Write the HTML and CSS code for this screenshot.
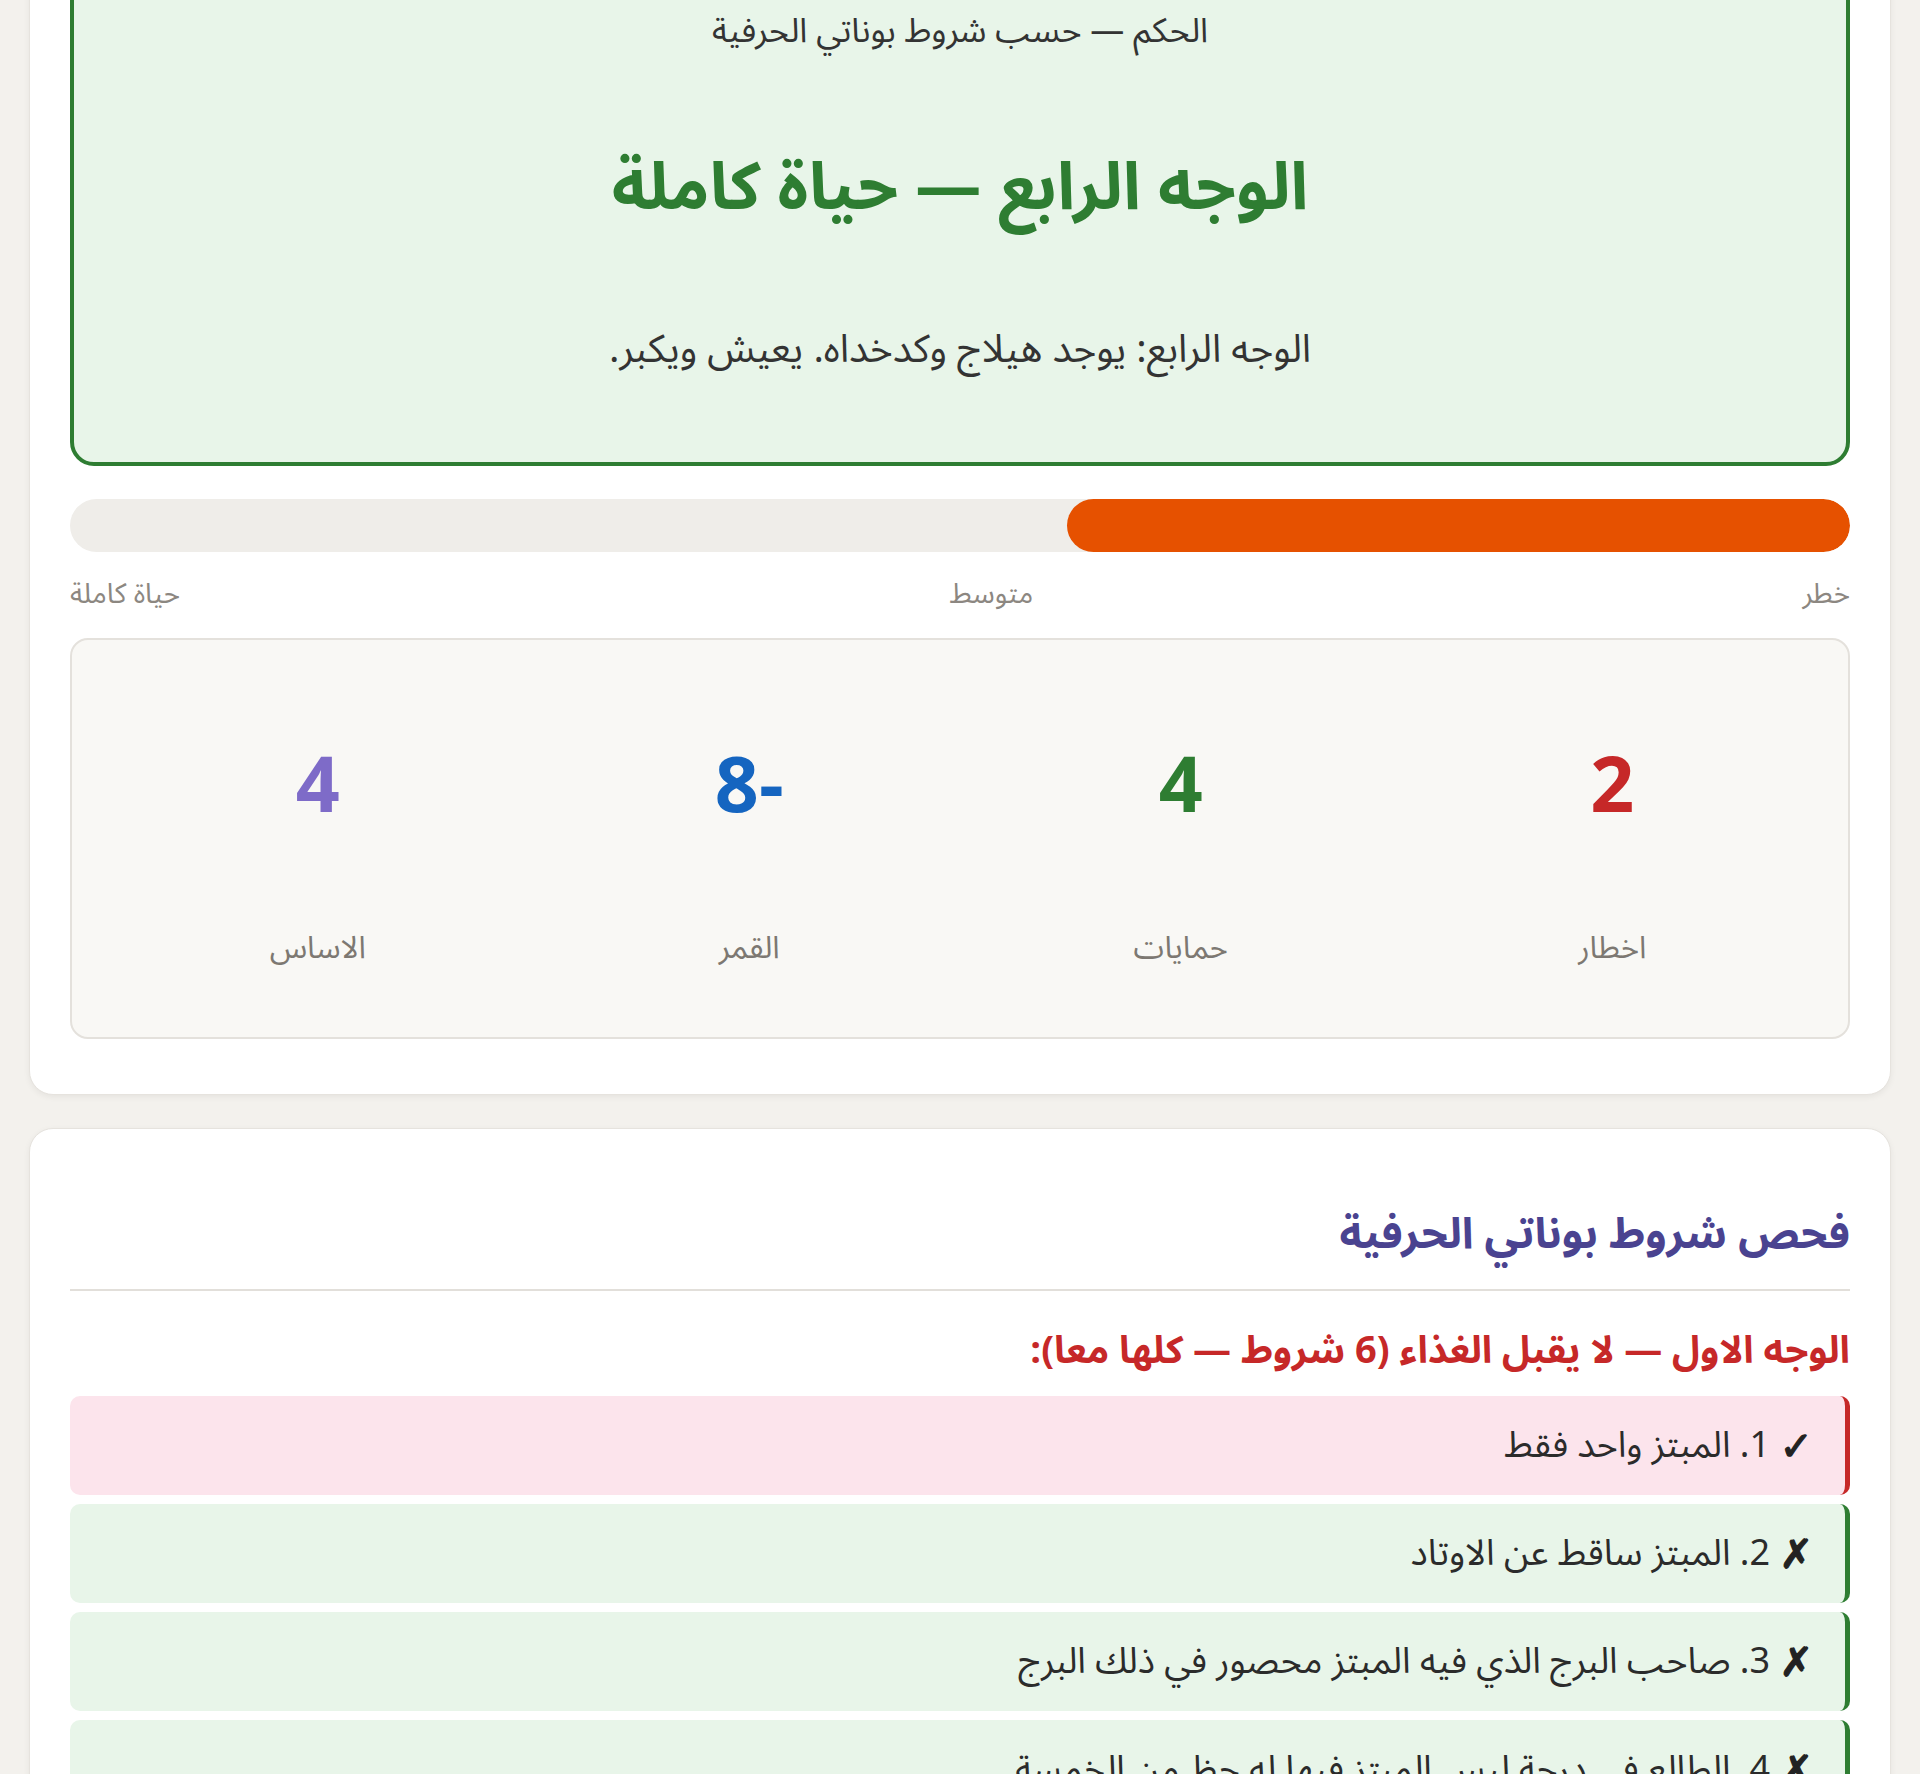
FILE: index.html
```html
<!DOCTYPE html>
<html lang="ar" dir="rtl">
<head>
<meta charset="utf-8">
<title>الحكم</title>
<link rel="stylesheet" href="styles.css">
</head>
<body>
<main class="page">
  <section class="card card-verdict">
    <div class="verdict">
      <div class="verdict-label">الحكم — حسب شروط بوناتي الحرفية</div>
      <h1 class="verdict-title">الوجه الرابع — حياة كاملة</h1>
      <p class="verdict-desc">الوجه الرابع: يوجد هيلاج وكدخداه. يعيش ويكبر.</p>
    </div>
    <div class="meter">
      <div class="meter-fill" style="width:44%"></div>
    </div>
    <div class="meter-labels">
      <span>خطر</span>
      <span>متوسط</span>
      <span>حياة كاملة</span>
    </div>
    <div class="stats">
      <div class="stat">
        <div class="stat-num num-red">2</div>
        <div class="stat-label">اخطار</div>
      </div>
      <div class="stat">
        <div class="stat-num num-green">4</div>
        <div class="stat-label">حمايات</div>
      </div>
      <div class="stat">
        <div class="stat-num num-blue">-8</div>
        <div class="stat-label">القمر</div>
      </div>
      <div class="stat">
        <div class="stat-num num-purple">4</div>
        <div class="stat-label">الاساس</div>
      </div>
    </div>
  </section>

  <section class="card card-check">
    <h2 class="check-title">فحص شروط بوناتي الحرفية</h2>
    <h3 class="face-title">الوجه الاول — لا يقبل الغذاء (6 شروط — كلها معا):</h3>
    <ul class="conds">
      <li class="cond cond-met"><span class="mark">✓</span> 1. المبتز واحد فقط</li>
      <li class="cond cond-unmet"><span class="mark">✗</span> 2. المبتز ساقط عن الاوتاد</li>
      <li class="cond cond-unmet"><span class="mark">✗</span> 3. صاحب البرج الذي فيه المبتز محصور في ذلك البرج</li>
      <li class="cond cond-unmet"><span class="mark">✗</span> 4. الطالع في درجة ليس المبتز فيها له حظ من الخمسة</li>
      <li class="cond cond-unmet"><span class="mark">✗</span> 5. القمر ساقط عن الاوتاد</li>
    </ul>
  </section>
</main>
</body>
</html>
```

FILE: styles.css
```css
* {
  box-sizing: border-box;
}

html, body {
  margin: 0;
  padding: 0;
}

body {
  background: #f3f1ed;
  font-family: "Noto Sans Arabic", "Noto Sans", "DejaVu Sans", sans-serif;
  color: #333;
}

.page {
  padding: 0 29px 40px;
  display: flex;
  flex-direction: column;
  gap: 33px;
}

.card {
  background: #ffffff;
  border: 1px solid #e6e3de;
  border-radius: 24px;
  box-shadow: 0 2px 6px rgba(0, 0, 0, 0.06);
  padding: 40px 40px 55px;
}

.card-verdict {
  margin-top: -74px;
}

.verdict {
  background: #e8f5e9;
  border: 4px solid #2e7d32;
  border-radius: 24px;
  padding: 40px 40px 88px;
  text-align: center;
}

.verdict-label {
  font-size: 34px;
  line-height: 40px;
  color: #333;
}

.verdict-title {
  margin: 97px 0 0;
  font-size: 66px;
  line-height: 80px;
  font-weight: 700;
  color: #2e7d32;
}

.verdict-desc {
  margin: 98px 0 0;
  font-size: 39px;
  line-height: 48px;
  color: #333;
}

.meter {
  margin-top: 33px;
  height: 53px;
  background: #efede9;
  border-radius: 27px;
  overflow: hidden;
  display: flex;
}

.meter-fill {
  background: #e65100;
  border-radius: 27px;
  height: 100%;
}

.meter-labels {
  margin-top: 26px;
  display: flex;
  justify-content: space-between;
  font-size: 28px;
  line-height: 34px;
  color: #8c8781;
}

.stats {
  margin-top: 26px;
  background: #f9f8f5;
  border: 2px solid #e4e1dc;
  border-radius: 18px;
  padding: 103px 20px 69px 30px;
  display: grid;
  grid-template-columns: repeat(4, 1fr);
}

.stat {
  display: flex;
  flex-direction: column;
  align-items: center;
  gap: 95px;
}

.stat-num {
  font-size: 77px;
  line-height: 90px;
  font-weight: 700;
}

.stat-label {
  font-size: 31px;
  line-height: 40px;
  color: #7d7872;
}

.num-red { color: #c62828; }
.num-green { color: #2e7d32; }
.num-blue { color: #1565c0; }
.num-purple { color: #7e6bc8; }

.card-check {
  padding-top: 78px;
}

.check-title {
  margin: 0;
  padding-bottom: 26px;
  border-bottom: 2px solid #e2dfda;
  font-size: 43px;
  line-height: 56px;
  font-weight: 700;
  color: #4a4390;
}

.face-title {
  margin: 36px 0 0;
  font-size: 38px;
  line-height: 48px;
  font-weight: 700;
  color: #c62828;
}

.conds {
  list-style: none;
  margin: 21px 0 0;
  padding: 0;
  display: flex;
  flex-direction: column;
  gap: 9px;
}

.cond {
  height: 99px;
  display: flex;
  align-items: center;
  padding: 0 32px;
  border-radius: 10px;
  border-right: 5px solid;
  font-size: 36px;
  color: #2b2b2b;
  white-space: pre;
}

.mark {
  font-family: "DejaVu Sans", sans-serif;
  font-weight: 700;
  font-size: 40px;
  color: #222;
  -webkit-text-stroke: 1.2px #222;
}

.cond-met {
  background: #fce4ec;
  border-right-color: #c62828;
}

.cond-unmet {
  background: #e8f5e9;
  border-right-color: #2e7d32;
}
```
